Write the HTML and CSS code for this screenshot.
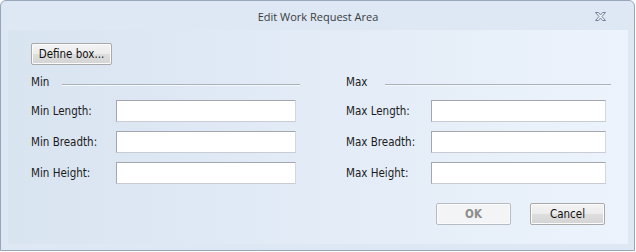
FILE: index.html
```html
<!DOCTYPE html>
<html lang="en">
<head>
  <meta charset="UTF-8" />
  <title>Edit Work Request Area</title>
  <link rel="stylesheet" href="styles.css">
</head>
<body>
  <div class="window">
    <div class="titlebar">
      <span class="title">Edit Work Request Area</span>
      <span class="close">
        <svg width="13" height="11" viewBox="0 0 13 11">
          <polygon points="1.5,1.5 4.5,1.5 6.5,4 8.5,1.5 11.5,1.5 8,5.5 11.5,9.5 8.5,9.5 6.5,7 4.5,9.5 1.5,9.5 5,5.5" fill="#eef3f9" stroke="#71829a" stroke-width="1" stroke-linejoin="round"/>
        </svg>
      </span>
    </div>
    <div class="client">
      <button class="btn define">Define box...</button>

      <div class="columns">
        <div class="group min">
          <div class="group-head"><span>Min</span><div class="rule"></div></div>
          <div class="field"><label>Min Length:</label><input type="text"></div>
          <div class="field"><label>Min Breadth:</label><input type="text"></div>
          <div class="field"><label>Min Height:</label><input type="text"></div>
        </div>
        <div class="group max">
          <div class="group-head"><span>Max</span><div class="rule"></div></div>
          <div class="field"><label>Max Length:</label><input type="text"></div>
          <div class="field"><label>Max Breadth:</label><input type="text"></div>
          <div class="field"><label>Max Height:</label><input type="text"></div>
        </div>
      </div>

      <div class="footer">
        <button class="btn" disabled>OK</button>
        <button class="btn">Cancel</button>
      </div>
    </div>
  </div>
</body>
</html>
```

FILE: styles.css
```css
* { box-sizing: border-box; }
body {
  margin: 0;
  background: #ffffff;
  font-family: 'DejaVu Sans Condensed', 'Liberation Sans', sans-serif;
  font-size: 11.5px;
  color: #1b1b1b;
}
.window {
  width: 635px;
  height: 251px;
  border: 1px solid #97a6b9;
  border-radius: 6px 6px 0 0;
  background: #dde8f4;
  padding: 0 6px 6px 7px;
}
.titlebar {
  height: 29px;
  display: flex;
  align-items: center;
  justify-content: center;
  position: relative;
}
.title {
  font-family: 'Open Sans', 'Liberation Sans', sans-serif;
  font-size: 11px;
  color: #3b3b3b;
  margin-top: 2px;
}
.close {
  position: absolute;
  right: 21px;
  top: 10px;
  width: 13px;
  height: 11px;
  display: flex;
}
.client {
  width: 620px;
  height: 214px;
  background: linear-gradient(to right, #d9e4f1, #ecf3fc);
  padding: 13px 23px 0 23px;
  display: flex;
  flex-direction: column;
}
.btn {
  font-family: 'DejaVu Sans Condensed', 'Liberation Sans', sans-serif;
  font-size: 11.5px;
  color: #111;
  height: 22px;
  width: 75px;
  padding: 0;
  border: 1px solid #a9a9a9;
  border-radius: 2px;
  background: linear-gradient(to bottom, #f3f3f3 0%, #ececec 50%, #dedede 51%, #d4d4d4 100%);
  box-shadow: inset 0 0 0 1px #fbfbfb;
}
.btn:disabled {
  color: #8c8c8c;
  border-color: #b7bcc2;
  background: #f2f4f6;
  font-weight: bold;
}
.define {
  width: 81px;
  align-self: flex-start;
}
.columns {
  display: grid;
  grid-template-columns: 269px 265px;
  column-gap: 46px;
  margin-top: 9px;
}
.group-head {
  display: flex;
  align-items: center;
  height: 15px;
  margin-bottom: 11px;
}
.group-head span {
  width: 31px;
}
.max .group-head span {
  width: 39px;
}
.rule {
  flex: 1;
  border-top: 1px solid #a9b1bb;
  border-bottom: 1px solid #f6f9fc;
  margin-top: 6px;
}
.field {
  display: flex;
  align-items: center;
  height: 22px;
  margin-bottom: 9px;
}
.field label {
  width: 85px;
}
.field input {
  height: 22px;
  width: 180px;
  border: 1px solid;
  border-color: #a4a8ae #d5d9df #c9cdd3 #a4a8ae;
  background: #ffffff;
  margin: 0;
  padding: 0 3px;
}
.max .field input {
  width: 175px;
}
.footer {
  display: flex;
  justify-content: flex-end;
  gap: 19px;
  margin-top: 10px;
}
```
